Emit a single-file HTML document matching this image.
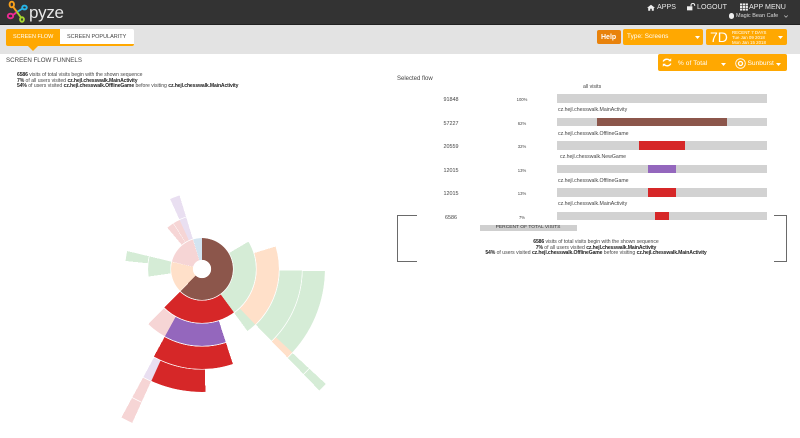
<!DOCTYPE html>
<html><head><meta charset="utf-8">
<style>
html,body{margin:0;padding:0;background:#fff}
body{width:800px;height:432px;position:relative;overflow:hidden;font-family:"Liberation Sans",sans-serif;color:#333}
div{position:absolute;box-sizing:border-box}
.t{white-space:nowrap;line-height:1}
.o{background:#ffa801;border-radius:2px}
.w{color:#fff}
.bar{left:557px;width:210px;background:#d2d2d2}
.seg{top:0;bottom:0}
.num{width:60px;text-align:center;font-size:5.4px;color:#444;line-height:1;white-space:nowrap}
.lab{font-size:5.2px;color:#444;line-height:1;white-space:nowrap}
.pc{width:40px;text-align:center;font-size:4.2px;color:#444;line-height:1;white-space:nowrap}
.sum{font-size:5.1px;line-height:5.5px;color:#444;white-space:nowrap}
.sum b{color:#222;letter-spacing:-.13px}
.r{border-radius:50%}
#sb{left:0;top:0;width:400px;height:432px;filter:blur(.25px)}
</style></head><body>

<div style="left:0;top:0;width:800px;height:25px;background:#333"></div>
<div style="left:0;top:24px;width:800px;height:1px;background:#222"></div>
<div style="left:0;top:25px;width:800px;height:29px;background:#e3e3e3"></div>

<svg style="position:absolute;left:0;top:0" width="30" height="24" viewBox="0 0 30 24" fill="none" stroke-width="1.900" stroke-linecap="round">
<ellipse cx="11.800" cy="4.500" rx="2.200" ry="2.800" stroke="#f9a11b"/><path d="M13 6.700L17 12" stroke="#f9a11b"/>
<ellipse cx="24.500" cy="7.500" rx="2.300" ry="1.900" stroke="#27b5e8"/><path d="M22.500 8.500L17 12" stroke="#27b5e8"/>
<ellipse cx="10.500" cy="16" rx="2.700" ry="2.300" stroke="#ec2a92"/><path d="M13 15L17 12" stroke="#ec2a92"/>
<ellipse cx="22" cy="19.500" rx="1.900" ry="2.300" stroke="#a6d62f"/><path d="M21 17.500L17 12" stroke="#a6d62f"/>
</svg>
<div class="t" style="left:29px;top:3.500px;font-size:17px;color:#e8e8e8;letter-spacing:-.3px">pyze</div>

<svg style="position:absolute;left:647px;top:3.500px" width="8" height="7" viewBox="0 0 10 8"><path d="M5 .5L0 4.500H1.500V8H4V5.500H6V8H8.500V4.500H10Z" fill="#eee"/></svg>
<div class="t" style="left:657px;top:3.500px;font-size:7.100px;color:#e8e8e8">APPS</div>
<svg style="position:absolute;left:687px;top:3px" width="9" height="7.500" viewBox="0 0 10 8"><rect x="0" y="3.500" width="6" height="4.500" fill="#eee"/><path d="M4.500 3.500V2A2 1.600 0 0 1 8.500 2V3" fill="none" stroke="#eee" stroke-width="1.200"/></svg>
<div class="t" style="left:697px;top:3.500px;font-size:7.100px;color:#e8e8e8">LOGOUT</div>
<svg style="position:absolute;left:740px;top:3px" width="8" height="8" viewBox="0 0 9 8" fill="#eee"><rect width="2.500" height="2.200"/><rect x="3.200" width="2.500" height="2.200"/><rect x="6.400" width="2.500" height="2.200"/><rect y="2.900" width="2.500" height="2.200"/><rect x="3.200" y="2.900" width="2.500" height="2.200"/><rect x="6.400" y="2.900" width="2.500" height="2.200"/><rect y="5.800" width="2.500" height="2.200"/><rect x="3.200" y="5.800" width="2.500" height="2.200"/><rect x="6.400" y="5.800" width="2.500" height="2.200"/></svg>
<div class="t" style="left:749px;top:3.500px;font-size:7.100px;color:#e8e8e8">APP MENU</div>
<div style="left:728.500px;top:13px;width:5.500px;height:5.500px;border-radius:50%;background:#eee"></div>
<div class="t" style="left:736px;top:13.500px;font-size:5.500px;color:#ddd">Magic Bean Cafe</div>
<svg style="position:absolute;left:784px;top:15px" width="4" height="3" viewBox="0 0 4 3"><path d="M.3.500L2 2.200 3.700.500" fill="none" stroke="#ccc" stroke-width=".7"/></svg>

<div style="left:6px;top:29px;width:54px;height:17px;background:#ffa801;border-radius:2px 0 0 2px"></div>
<svg style="position:absolute;left:28px;top:46px" width="10" height="5"><path d="M0 0H10L5 5Z" fill="#ffa801"/></svg>
<div class="t" style="left:13px;top:34.500px;font-size:5.500px;color:#fff">SCREEN FLOW</div>
<div style="left:60px;top:29px;width:74px;height:17px;background:#fff;border-bottom:2px solid #ffa801;border-radius:0 2px 2px 0"></div>
<div class="t" style="left:67px;top:34.500px;font-size:5.500px;color:#444">SCREEN POPULARITY</div>

<div style="left:597px;top:30px;width:24px;height:14px;background:#e8820c;border-radius:2px"></div>
<div class="t w" style="left:601px;top:33.500px;font-size:7px;font-weight:bold">Help</div>
<div class="o" style="left:623px;top:29px;width:80px;height:16px"></div>
<div class="t w" style="left:627px;top:34px;font-size:6.300px;letter-spacing:.1px">Type: Screens</div>
<svg style="position:absolute;left:695px;top:36px" width="5" height="3"><path d="M0 0H5L2.500 3Z" fill="#fff"/></svg>
<div class="o" style="left:706px;top:29px;width:81px;height:16px"></div>
<div class="t w" style="left:710px;top:30px;font-size:14px">7D</div>
<div class="t w" style="left:732px;top:29.500px;font-size:4.400px;line-height:5px">RECENT 7 DAYS<br>Tue Jan 09 2018<br>Mon Jan 15 2018</div>
<svg style="position:absolute;left:778px;top:36px" width="5" height="3"><path d="M0 0H5L2.500 3Z" fill="#fff"/></svg>

<div class="o" style="left:658px;top:54px;width:129px;height:17px"></div>
<svg style="position:absolute;left:662px;top:58px" width="10" height="9" viewBox="0 0 10 9" fill="none" stroke="#fff" stroke-width="1.400"><path d="M1.200 3.500A4 3.600 0 0 1 8 2.500"/><path d="M8.800 5.500A4 3.600 0 0 1 2 6.500"/><path d="M9.200 .3V3.300H6.300Z" fill="#fff" stroke="none"/><path d="M.8 8.700V5.700H3.700Z" fill="#fff" stroke="none"/></svg>
<div class="t w" style="left:678px;top:61px;font-size:6.500px;letter-spacing:.1px">% of Total</div>
<svg style="position:absolute;left:721px;top:63px" width="5" height="3"><path d="M0 0H5L2.500 3Z" fill="#fff"/></svg>
<svg style="position:absolute;left:735px;top:58px" width="11" height="11" viewBox="0 0 11 11" fill="none" stroke="#fff"><circle cx="5.500" cy="5.500" r="4.800" stroke-width=".9"/><circle cx="5.500" cy="5.500" r="2" stroke-width="1.300"/></svg>
<div class="t w" style="left:747.500px;top:61px;font-size:6.600px">Sunburst</div>
<svg style="position:absolute;left:776px;top:63px" width="5" height="3"><path d="M0 0H5L2.500 3Z" fill="#fff"/></svg>

<div class="t" style="left:6px;top:58px;font-size:6.200px;color:#444">SCREEN FLOW FUNNELS</div>
<div class="sum" style="left:17px;top:73px"><b>6586</b> visits of total visits begin with the shown sequence<br><b>7%</b> of all users visited <b>cz.hejl.chesswalk.MainActivity</b><br><b>54%</b> of users visited <b>cz.hejl.chesswalk.OfflineGame</b> before visiting <b>cz.hejl.chesswalk.MainActivity</b></div>

<div id="sb">
<div class="r" style="left:32.700px;top:100px;width:338px;height:338px;background:conic-gradient(transparent 0 132.900deg,#d5ecd6 132.900deg 136deg,transparent 136deg 204.400deg,#f6d5d5 204.400deg 208.500deg,transparent 208.500deg);-webkit-mask:radial-gradient(circle closest-side,transparent 146.500px,#000 146.800px);mask:radial-gradient(circle closest-side,transparent 146.500px,#000 146.800px)"></div>
<div class="r" style="left:55.700px;top:123px;width:292px;height:292px;background:conic-gradient(transparent 0 132.900deg,#d5ecd6 132.900deg 136deg,transparent 136deg 204.400deg,#f6d5d5 204.400deg 208.500deg,transparent 208.500deg);-webkit-mask:radial-gradient(circle closest-side,transparent 123.500px,#000 123.800px);mask:radial-gradient(circle closest-side,transparent 123.500px,#000 123.800px)"></div>
<div class="r" style="left:78.700px;top:146px;width:246px;height:246px;background:conic-gradient(transparent 0 91deg,#d5ecd6 91deg 132.600deg,#ffe0c9 132.900deg 136deg,transparent 136deg 178.400deg,#d62728 178.400deg 204.200deg,#e9dff1 204.500deg 208.500deg,transparent 208.500deg);-webkit-mask:radial-gradient(circle closest-side,transparent 100.500px,#000 100.800px);mask:radial-gradient(circle closest-side,transparent 100.500px,#000 100.800px)"></div>
<div class="r" style="left:101.700px;top:169px;width:200px;height:200px;background:conic-gradient(transparent 0 91deg,#d5ecd6 91deg 136deg,transparent 136deg 162deg,#d62728 162deg 208.800deg,transparent 208.800deg);-webkit-mask:radial-gradient(circle closest-side,transparent 77.500px,#000 77.800px);mask:radial-gradient(circle closest-side,transparent 77.500px,#000 77.800px)"></div>
<div class="r" style="left:124.700px;top:192px;width:154px;height:154px;background:conic-gradient(transparent 0 73deg,#ffe0c9 73deg 136deg,#d5ecd6 136.400deg 143.800deg,transparent 143.800deg 162deg,#9467bd 162deg 208.700deg,#f6d5d5 209deg 224.200deg,transparent 224.200deg 276deg,#d5ecd6 276deg 283.500deg,transparent 283.500deg 335.500deg,#e9dff1 335.500deg 343deg,transparent 343deg);-webkit-mask:radial-gradient(circle closest-side,transparent 54.500px,#000 54.800px);mask:radial-gradient(circle closest-side,transparent 54.500px,#000 54.800px)"></div>
<div class="r" style="left:147.700px;top:215px;width:108px;height:108px;background:conic-gradient(transparent 0 59.500deg,#d5ecd6 59.500deg 143.500deg,#d62728 143.800deg 224.300deg,transparent 224.300deg 262deg,#d5ecd6 262deg 283.500deg,transparent 283.500deg 320deg,#f6d5d5 320deg 327.700deg,#fff 327.700deg 328.200deg,#f6d5d5 328.200deg 335.300deg,#e9dff1 335.600deg 343deg,transparent 343deg);-webkit-mask:radial-gradient(circle closest-side,transparent 31.500px,#000 31.800px);mask:radial-gradient(circle closest-side,transparent 31.500px,#000 31.800px)"></div>
<div class="r" style="left:170.700px;top:238px;width:62px;height:62px;background:conic-gradient(#8c564b 0 224deg,#fff 224deg 224.600deg,#ffe0c9 224.600deg 283.200deg,#fff 283.200deg 283.800deg,#f6d5d5 283.800deg 342.800deg,#fff 342.800deg 343.300deg,#d3e4f1 343.300deg 359.600deg,#fff 359.600deg);-webkit-mask:radial-gradient(circle closest-side,transparent 9px,#000 9.300px);mask:radial-gradient(circle closest-side,transparent 9px,#000 9.300px)"></div>
</div>

<div class="t" style="left:397px;top:75.500px;font-size:6px;color:#444">Selected flow</div>

<div class="lab" style="left:583px;top:84.500px">all visits</div>
<div class="lab" style="left:558px;top:108px">cz.hejl.chesswalk.MainActivity</div>
<div class="lab" style="left:558px;top:131.500px">cz.hejl.chesswalk.OfflineGame</div>
<div class="lab" style="left:560px;top:155px">cz.hejl.chesswalk.NewGame</div>
<div class="lab" style="left:558px;top:178.500px">cz.hejl.chesswalk.OfflineGame</div>
<div class="lab" style="left:558px;top:202px">cz.hejl.chesswalk.MainActivity</div>

<div class="num" style="left:421px;top:98px">91848</div>
<div class="num" style="left:421px;top:121.500px">57227</div>
<div class="num" style="left:421px;top:145px">20559</div>
<div class="num" style="left:421px;top:168.500px">12015</div>
<div class="num" style="left:421px;top:192px">12015</div>
<div class="num" style="left:421px;top:215.500px">6586</div>

<div class="pc" style="left:502px;top:98px">100%</div>
<div class="pc" style="left:502px;top:121.500px">62%</div>
<div class="pc" style="left:502px;top:145px">32%</div>
<div class="pc" style="left:502px;top:168.500px">13%</div>
<div class="pc" style="left:502px;top:192px">13%</div>
<div class="pc" style="left:502px;top:215.500px">7%</div>

<div class="bar" style="top:94px;height:8.500px"></div>
<div class="bar" style="top:117.500px;height:8.500px"><div class="seg" style="left:40px;width:130px;background:#8c564b"></div></div>
<div class="bar" style="top:141px;height:8.500px"><div class="seg" style="left:82px;width:46px;background:#d62728"></div></div>
<div class="bar" style="top:164.500px;height:8.500px"><div class="seg" style="left:91px;width:28px;background:#9467bd"></div></div>
<div class="bar" style="top:188px;height:8.500px"><div class="seg" style="left:91px;width:28px;background:#d62728"></div></div>
<div class="bar" style="top:211.500px;height:8.500px"><div class="seg" style="left:98px;width:14px;background:#d62728"></div></div>

<div style="left:479.500px;top:225px;width:97px;height:6px;background:#cfcfcf"></div>
<div class="t" style="left:479.500px;top:226px;width:97px;text-align:center;font-size:4.900px;color:#333">PERCENT OF TOTAL VISITS</div>

<div class="sum" style="left:397px;top:240px;width:398px;text-align:center"><b>6586</b> visits of total visits begin with the shown sequence<br><b>7%</b> of all users visited <b>cz.hejl.chesswalk.MainActivity</b><br><b>54%</b> of users visited <b>cz.hejl.chesswalk.OfflineGame</b> before visiting <b>cz.hejl.chesswalk.MainActivity</b></div>

<div style="left:397px;top:215px;width:20px;height:47px;border:1.500px solid #6a6a6a;border-right:0"></div>
<div style="left:774px;top:215px;width:13px;height:47px;border:1.500px solid #6a6a6a;border-left:0"></div>

</body></html>
